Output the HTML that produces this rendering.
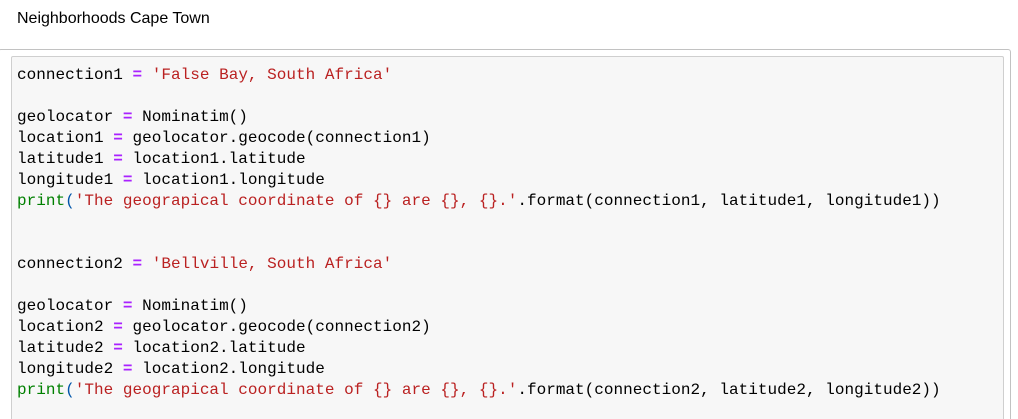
<!DOCTYPE html>
<html><head><meta charset="utf-8"><style>
html,body{margin:0;background:#fff;width:1018px;height:419px;overflow:hidden;position:relative}
.title{position:absolute;left:17px;top:10px;font:16px "Liberation Sans",Arial,sans-serif;color:#000}
.outer{position:absolute;left:-2px;top:49px;width:1013px;height:370px;border:1px solid #c2c2c2;border-bottom:none;border-radius:3px 3px 0 0;box-sizing:border-box}
.inner{position:absolute;left:11px;top:56px;width:993px;height:363px;background:#f7f7f7;border:1px solid #cfcfcf;border-bottom:none;border-radius:2px 2px 0 0;box-sizing:border-box}
pre{position:absolute;left:17px;top:65px;margin:0;font:16px/21px "Liberation Mono","DejaVu Sans Mono",monospace;letter-spacing:0.02px;color:#000}
.o{color:#aa22ff;font-weight:bold}.s{color:#ba2121}.k{color:#008000}.p{color:#0055aa}
</style></head><body>
<div class="title">Neighborhoods Cape Town</div>
<div class="outer"></div>
<div class="inner"></div>
<pre>connection1 <span class="o">=</span> <span class="s">'False Bay, South Africa'</span>

geolocator <span class="o">=</span> Nominatim()
location1 <span class="o">=</span> geolocator.geocode(connection1)
latitude1 <span class="o">=</span> location1.latitude
longitude1 <span class="o">=</span> location1.longitude
<span class="k">print</span><span class="p">(</span><span class="s">'The geograpical coordinate of {} are {}, {}.'</span>.format(connection1, latitude1, longitude1))


connection2 <span class="o">=</span> <span class="s">'Bellville, South Africa'</span>

geolocator <span class="o">=</span> Nominatim()
location2 <span class="o">=</span> geolocator.geocode(connection2)
latitude2 <span class="o">=</span> location2.latitude
longitude2 <span class="o">=</span> location2.longitude
<span class="k">print</span><span class="p">(</span><span class="s">'The geograpical coordinate of {} are {}, {}.'</span>.format(connection2, latitude2, longitude2))</pre>
</body></html>
